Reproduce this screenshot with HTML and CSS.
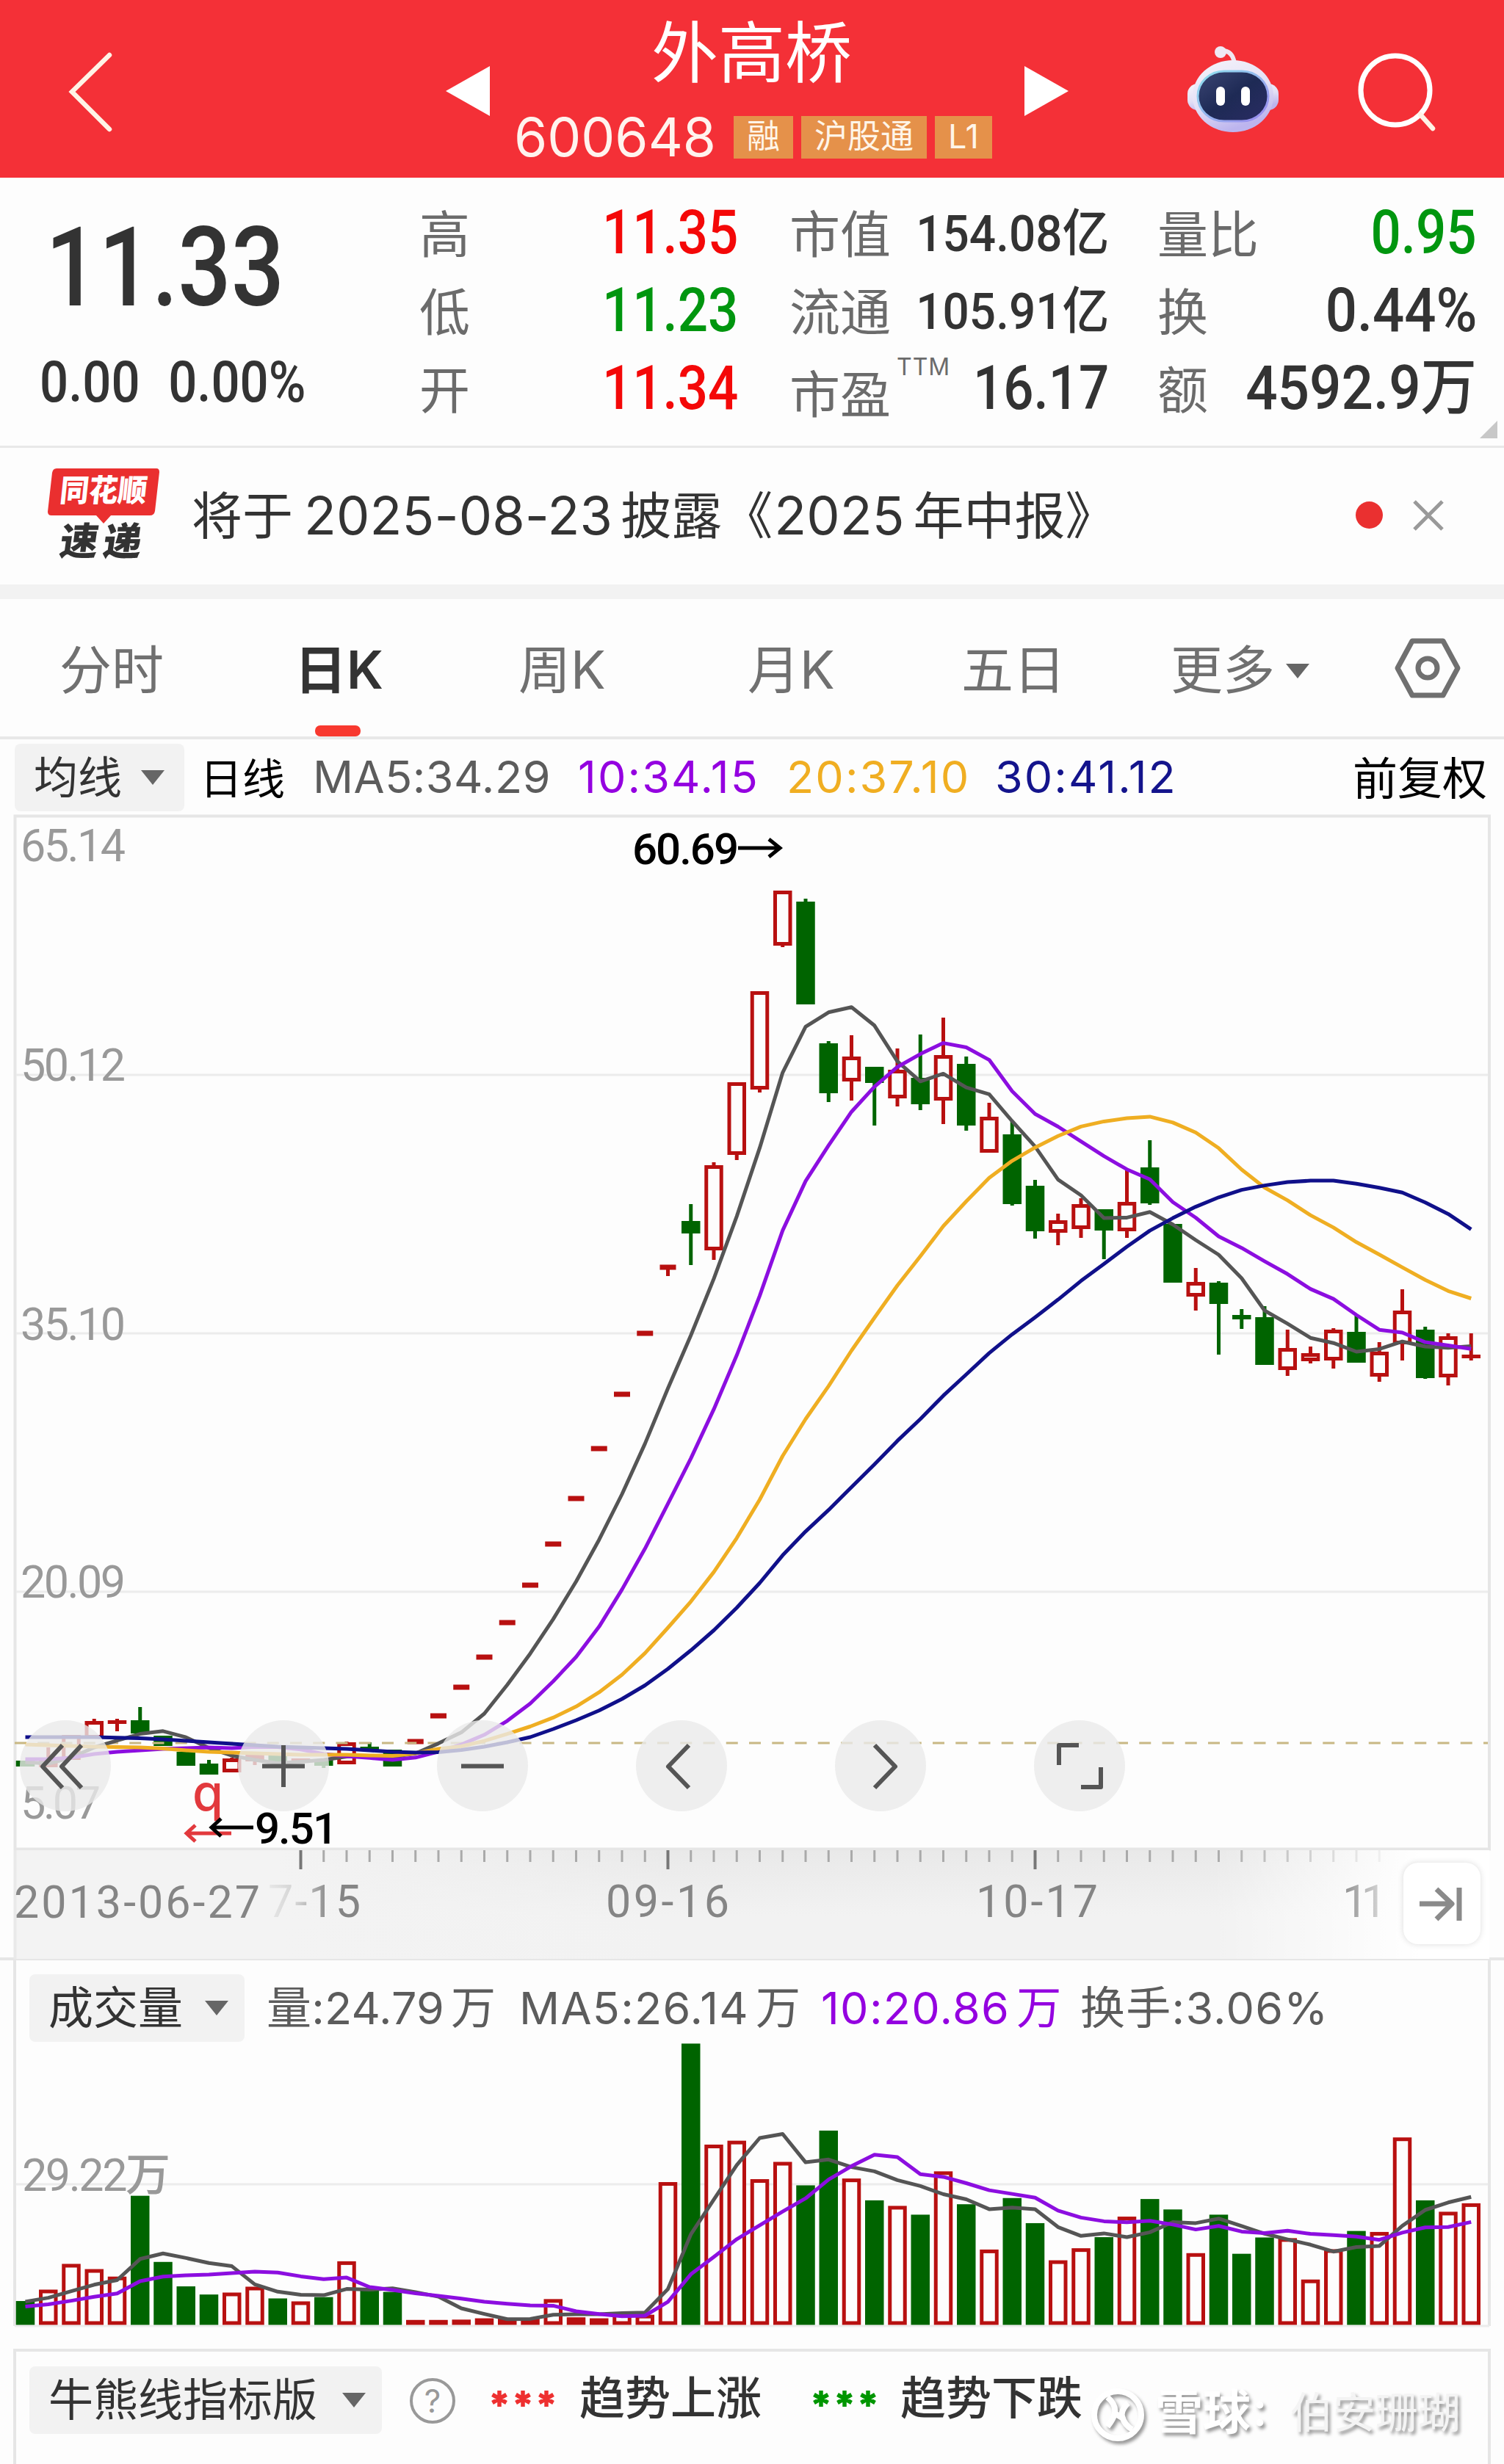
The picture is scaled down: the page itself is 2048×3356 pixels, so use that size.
FILE: index.html
```html
<!DOCTYPE html>
<html lang="zh-CN">
<head>
<meta charset="utf-8">
<title>外高桥 600648</title>
<link rel="stylesheet" href="styles.css">
</head>
<body>
<header class="topbar">
  <svg class="icon-back" width="70" height="120" viewBox="0 0 70 120"><path d="M59 10 L8 60 L59 111" /></svg>
  <svg class="icon-prev" width="60" height="68" viewBox="0 0 60 68"><path d="M60 0 V68 L0 34 Z"/></svg>
  <div class="stock">
    <div class="stock-name">外高桥</div>
    <div class="stock-meta">
      <span class="code">600648</span>
      <span class="badge">融</span><span class="badge">沪股通</span><span class="badge">L1</span>
    </div>
  </div>
  <svg class="icon-next" width="60" height="68" viewBox="0 0 60 68"><path d="M0 0 V68 L60 34 Z"/></svg>
  <svg class="icon-robot" width="130" height="124" viewBox="0 0 130 124">
    <defs>
      <linearGradient id="shell" x1="0" y1="0" x2="0.4" y2="1"><stop offset="0" stop-color="#f6f4fb"/><stop offset="0.6" stop-color="#e3dff5"/><stop offset="1" stop-color="#bcb4ee"/></linearGradient>
      <linearGradient id="visor" x1="0" y1="0" x2="1" y2="1"><stop offset="0" stop-color="#3b4674"/><stop offset="0.5" stop-color="#1e2a55"/><stop offset="1" stop-color="#2a2c63"/></linearGradient>
      <linearGradient id="rim" x1="0" y1="0" x2="1" y2="1"><stop offset="0" stop-color="#8fe3ee"/><stop offset="1" stop-color="#9a86ee"/></linearGradient>
    </defs>
    <path class="antenna" d="M49 11 Q64 10 67 28"/>
    <circle cx="48" cy="13" r="8" fill="#efe9f4"/>
    <rect x="3" y="56" width="124" height="36" rx="14" fill="url(#shell)"/>
    <ellipse cx="65" cy="73" rx="55" ry="49" fill="url(#shell)"/>
    <rect x="17" y="39" width="96" height="68" rx="36" fill="url(#visor)" stroke="url(#rim)" stroke-width="3"/>
    <rect x="42" y="60" width="12" height="26" rx="6" fill="#fff"/>
    <rect x="76" y="60" width="12" height="26" rx="6" fill="#fff"/>
  </svg>
  <svg class="icon-search" width="120" height="120" viewBox="0 0 120 120"><circle cx="54" cy="58" r="47"/><path d="M88 91 L105 110"/></svg>
</header>

<section class="quote">
  <div class="last">
    <div class="price">11.33</div>
    <div class="change"><span>0.00</span><span>0.00%</span></div>
  </div>
  <dl class="stats stats-a">
    <div><dt>高</dt><dd class="up">11.35</dd></div>
    <div><dt>低</dt><dd class="down">11.23</dd></div>
    <div><dt>开</dt><dd class="up">11.34</dd></div>
  </dl>
  <dl class="stats stats-b">
    <div><dt>市值</dt><dd class="small">154.08亿</dd></div>
    <div><dt>流通</dt><dd class="small">105.91亿</dd></div>
    <div><dt class="pe">市盈<sup>TTM</sup></dt><dd>16.17</dd></div>
  </dl>
  <dl class="stats stats-c">
    <div><dt>量比</dt><dd class="down">0.95</dd></div>
    <div><dt>换</dt><dd class="turnover">0.44%</dd></div>
    <div><dt>额</dt><dd class="amount">4592.9万</dd></div>
  </dl>
  <svg class="expand" width="24" height="24" viewBox="0 0 24 24"><path d="M24 0 V24 H0 Z"/></svg>
</section>

<section class="news">
  <div class="news-logo">
    <svg class="bubble" width="152" height="76" viewBox="0 0 152 76"><path d="M12 0 H148 Q152 0 152 5 L146 58 Q145 64 139 64 H86 L76 75 L66 64 H5 Q0 64 0 59 L6 6 Q7 0 12 0Z"/></svg>
    <span class="logo-top">同花顺</span>
    <span class="logo-bottom">速递</span>
  </div>
  <p class="news-text">将于<span class="latin">2025-08-23</span>披露《<span class="latin year">2025</span>年中报》</p>
  <span class="dot"></span>
  <svg class="icon-close" width="44" height="44" viewBox="0 0 44 44"><path d="M3 3 L41 41 M41 3 L3 41"/></svg>
</section>

<nav class="tabs">
  <a class="t1">分时</a><a class="t2 active">日K</a><a class="t3">周K</a><a class="t4">月K</a><a class="t5">五日</a><a class="t6">更多<i class="caret"></i></a>
  <svg class="icon-settings" width="92" height="84" viewBox="0 0 92 84"><path d="M25 5 H67 L87 42 L67 79 H25 L5 42 Z"/><circle cx="46" cy="42" r="13"/></svg>
</nav>

<div class="indicator main-ind">
  <span class="chip chip-ma">均线<i class="caret"></i></span>
  <span class="period">日线</span>
  <span class="ma v5">MA5:34.29</span>
  <span class="ma v10">10:34.15</span>
  <span class="ma v20">20:37.10</span>
  <span class="ma v30">30:41.12</span>
  <span class="adjust">前复权</span>
</div>

<section class="chart">
  <svg id="price" width="2048" height="1411" viewBox="0 1109 2048 1411">
    <path class="frame" d="M20.500 2520 V1111.500 H2028 V2518.500 H20"/>
    <path class="grid" d="M22 1464 H2026 M22 1816 H2026 M22 2168 H2026"/>
    <g class="axis-text">
      <text x="28" y="1173" textLength="143">65.14</text>
      <text x="28" y="1472" textLength="143">50.12</text>
      <text x="28" y="1825" textLength="143">35.10</text>
      <text x="28" y="2176" textLength="143">20.09</text>
      <text x="28" y="2477" textLength="109">5.07</text>
    </g>
    <g id="candles"></g>
    <path class="ref" d="M20 2374 H2026"/>
    <g id="averages"></g>
    <g class="mark">
      <text x="861" y="1177" textLength="145">60.69</text>
      <path d="M1005 1155 H1062 M1047 1143 L1062 1155 L1047 1167"/>
    </g>
    <g class="mark event">
      <text class="q" x="262" y="2466">q</text>
      <path d="M315 2497 H254 M266 2486 L254 2497 L266 2508"/>
    </g>
    <g class="mark">
      <text x="347" y="2511" textLength="113">9.51</text>
      <path d="M345 2489 H288 M301 2477 L288 2489 L301 2501"/>
    </g>
  </svg>
  <div class="tools">
    <button><svg viewBox="0 0 124 124"><path d="M58 34 L31 63 L58 92 M84 34 L57 63 L84 92"/></svg></button>
    <button><svg viewBox="0 0 124 124"><path d="M62 34 V91 M33 62.500 H91"/></svg></button>
    <button><svg viewBox="0 0 124 124"><path d="M33 62.500 H91"/></svg></button>
    <button><svg viewBox="0 0 124 124"><path d="M72 34 L44 63 L72 92"/></svg></button>
    <button><svg viewBox="0 0 124 124"><path d="M54 34 L82 63 L54 92"/></svg></button>
    <button><svg viewBox="0 0 124 124"><path d="M34 61 V34 H61 M64 91 H91 V64"/></svg></button>
  </div>
</section>

<section class="timeline">
  <svg id="axis" width="2048" height="148" viewBox="0 2520 2048 148">
    <defs>
      <linearGradient id="fadeLeft" gradientUnits="userSpaceOnUse" x1="360" y1="0" x2="450" y2="0"><stop offset="0" stop-color="#858585" stop-opacity="0.08"/><stop offset="0.5" stop-color="#858585" stop-opacity="0.3"/><stop offset="1" stop-color="#858585"/></linearGradient>
      <linearGradient id="fadeRight" gradientUnits="userSpaceOnUse" x1="1820" y1="0" x2="1900" y2="0"><stop offset="0" stop-color="#858585"/><stop offset="1" stop-color="#858585" stop-opacity="0.1"/></linearGradient>
      <linearGradient id="band" x1="0" y1="0" x2="0" y2="1"><stop offset="0" stop-color="#e9e9e9"/><stop offset="0.6" stop-color="#f2f2f2"/></linearGradient>
      <linearGradient id="bandLeft" x1="0" y1="0" x2="1" y2="0"><stop offset="0.4" stop-color="#f3f3f3"/><stop offset="1" stop-color="#f3f3f3" stop-opacity="0"/></linearGradient>
      <linearGradient id="bandRight" x1="0" y1="0" x2="1" y2="0"><stop offset="0" stop-color="#fff" stop-opacity="0"/><stop offset="0.75" stop-color="#fff"/></linearGradient>
    </defs>
    <rect x="20" y="2520" width="2008" height="148" fill="url(#band)"/>
    <g id="ticks"></g>
    <rect x="20" y="2520" width="900" height="148" fill="url(#bandLeft)"/>
    <g id="ticksLeft"></g>
    <rect x="1650" y="2520" width="378" height="148" fill="url(#bandRight)"/>
    <rect class="side" x="18.500" y="2520" width="4" height="148"/>
    <g class="date">
      <text x="19" y="2612" textLength="335">2013-06-27</text>
      <text x="365" y="2611" textLength="126" fill="url(#fadeLeft)">7-15</text>
      <text x="825" y="2611" textLength="168">09-16</text>
      <text x="1329" y="2611" textLength="166">10-17</text>
      <text x="1828" y="2611" textLength="60" fill="url(#fadeRight)">11</text>
    </g>
  </svg>
  <button class="jump"><svg width="105" height="111" viewBox="0 0 105 111"><path d="M22 56 H62 M45 36 L66 56 L45 77 M76 34 V79"/></svg></button>
</section>

<section class="volume">
  <div class="indicator">
    <span class="chip chip-vol">成交量<i class="caret"></i></span>
    <span class="ma vol">量:24.79<b>万</b></span>
    <span class="ma v5">MA5:26.14<b>万</b></span>
    <span class="ma v10">10:20.86<b>万</b></span>
    <span class="ma turn">换手:3.06%</span>
  </div>
  <svg id="volume" width="2048" height="390" viewBox="0 2780 2048 390">
    <path class="grid" d="M22 2975 H2026"/>
    <g class="axis-text"><text x="30" y="2984" textLength="202">29.22万</text></g>
    <path class="baseline" d="M20 3168 H2028"/>
    <g id="bars"></g>
    <g id="volumeAverages"></g>
  </svg>
</section>

<section class="trend">
  <span class="chip chip-trend">牛熊线指标版<i class="caret"></i></span>
  <svg class="help" width="66" height="66" viewBox="0 0 66 66"><circle cx="33" cy="33" r="29"/><text x="33" y="49" text-anchor="middle">?</text></svg>
  <svg class="stars red" width="90" height="28" viewBox="0 0 90 28"><path d="M14 3 V25 M4.500 8.500 L23.500 19.500 M23.500 8.500 L4.500 19.500 M46 3 V25 M36.500 8.500 L55.500 19.500 M55.500 8.500 L36.500 19.500 M78 3 V25 M68.500 8.500 L87.500 19.500 M87.500 8.500 L68.500 19.500"/></svg>
  <span class="label rise">趋势上涨</span>
  <svg class="stars green" width="90" height="28" viewBox="0 0 90 28"><path d="M14 3 V25 M4.500 8.500 L23.500 19.500 M23.500 8.500 L4.500 19.500 M46 3 V25 M36.500 8.500 L55.500 19.500 M55.500 8.500 L36.500 19.500 M78 3 V25 M68.500 8.500 L87.500 19.500 M87.500 8.500 L68.500 19.500"/></svg>
  <span class="label fall">趋势下跌</span>
  <div class="watermark">
    <svg width="76" height="76" viewBox="0 0 76 76"><circle cx="38" cy="38" r="32"/><path d="M24 14 Q36 24 34 36 Q32 44 24 54 M52 22 Q42 32 44 40 Q47 52 58 58 M34 36 L44 42"/></svg>
    <span class="brand">雪球</span><span class="colon">：</span><span class="author">伯安珊瑚</span>
  </div>
</section>
<script src="chart.js"></script>
</body>
</html>
```
FILE: styles.css
```css
* { box-sizing: border-box; margin: 0; padding: 0; }
body {
  width: 2048px;
  height: 3356px;
  overflow: hidden;
  background: #fdfdfd;
  color: #333;
  font-family: Inter, "Noto Sans CJK SC", sans-serif;
}
svg { display: block; flex: none; }
i, b, sup { font-style: normal; font-weight: inherit; }
button { border: 0; background: none; }

.topbar { height: 242px; background: #f43037; display: flex; align-items: flex-start; color: #fff; }
.topbar path { fill: #fff; }
.topbar .icon-back { margin: 65px 0 0 90px; }
.topbar .icon-back path, .topbar .icon-search path { fill: none; stroke: #fff3e6; stroke-width: 6.500; stroke-linecap: round; }
.icon-prev { margin: 90px 0 0 447px; }
.stock { width: 728px; height: 242px; display: flex; flex-direction: column; align-items: center; }
.stock-name { font-size: 91px; line-height: 100px; margin: 22px 0 0 -15px; font-weight: 400; }
.stock-meta { display: flex; align-items: center; align-self: flex-start; height: 58px; margin: 36px 0 0 33px; }
.code { font-size: 73px; line-height: 58px; width: 299px; letter-spacing: 0; color: #fff3ee; font-weight: 400; white-space: nowrap; }
.badge { height: 58px; padding: 0 18px; margin-right: 11px; background: #e5914a; color: #fff5e8; font-size: 45px; line-height: 56px; }
.icon-next { margin: 90px 0 0; }
.icon-robot { margin: 58px 0 0 159px; }
.topbar .antenna { fill: none; stroke: #f0e6f0; stroke-width: 6; }
.icon-search { margin: 65px 0 0 102px; }
.icon-search circle { fill: none; stroke: #fff; stroke-width: 7; }

.quote { position: relative; height: 368px; display: flex; border-bottom: 3px solid #e8e8e8; }
.last { width: 571px; font-family: Roboto, sans-serif; }
.price { font-size: 150px; line-height: 150px; margin: 48px 0 0 62px; font-weight: 500; transform: scaleX(.85); transform-origin: left; width: max-content; }
.change { display: flex; gap: 43px; font-size: 77px; line-height: 77px; margin: 43px 0 0 54px; font-weight: 500; transform: scaleX(.895); transform-origin: left; width: max-content; }
.stats { padding-top: 23px; }
.stats-a { width: 434px; margin-right: 70px; }
.stats-b { width: 435px; margin-right: 66px; }
.stats-c { width: 435px; }
.stats > div { display: flex; justify-content: space-between; height: 106px; align-items: center; }
dt { font-size: 69px; line-height: 106px; color: #6b6b6b; font-weight: 370; white-space: nowrap; padding-top: 4px; }
.pe { display: flex; padding-top: 16px; }
.pe sup { font-size: 32px; line-height: 36px; letter-spacing: 1px; margin: -3px 0 0 8px; height: 36px; }
dd { font-family: Roboto, "Noto Sans CJK SC", sans-serif; font-size: 84px; line-height: 100px; font-weight: 500; transform: scaleX(.865); transform-origin: right; white-space: nowrap; margin-top: -3px; }
dd.small { font-size: 69px; transform: scaleX(.925); margin-top: 2px; }
.stats-b > div:first-child dd, .stats-b > div:nth-child(2) dd { margin-left: -60px; }
dd.turnover { transform: scaleX(.905); }
dd.amount { margin-left: -80px; transform: scaleX(.91); }
.up { color: #f40808; }
.down { color: #00960f; }
.expand { position: absolute; right: 9px; bottom: 10px; fill: #c8c8c8; }

.news { height: 206px; display: flex; align-items: flex-start; border-bottom: 20px solid #f2f2f2; }
.news-logo { position: relative; width: 152px; height: 140px; margin: 28px 0 0 65px; display: flex; flex-direction: column; align-items: center; }
.bubble { position: absolute; left: 0; top: 0; fill: #ea2f2f; }
.logo-top { position: relative; color: #fff; font-size: 42px; line-height: 60px; font-weight: 900; transform: skewX(-6deg) scaleX(.94); }
.logo-bottom { font-size: 52px; line-height: 56px; margin-top: 12px; letter-spacing: 7px; font-weight: 900; transform: skewX(-8deg); }
.news-text { width: 1585px; margin: 52px 0 0 44px; font-size: 69px; line-height: 80px; white-space: nowrap; }
.latin { font-size: 72px; padding: 0 11px 0 15px; letter-spacing: .1px; }
.year { padding: 0 12px 0 2px; }
.dot { width: 37px; height: 37px; border-radius: 50%; background: #ea3030; margin-top: 73px; }
.icon-close { margin: 70px 0 0 40px; }
.icon-close path { stroke: #999; stroke-width: 5; }

.tabs { position: relative; height: 191px; border-bottom: 4px solid #e8e8e8; display: flex; align-items: flex-start; font-size: 71px; line-height: 100px; color: #707070; font-weight: 370; }
.tabs a { margin-top: 46px; height: 141px; white-space: nowrap; flex: none; }
.t1 { width: 320px; margin-left: 81px; }
.tabs .active { color: #333; font-weight: 600; width: 115px; display: flex; flex-direction: column; position: relative; margin-right: 190px; }
.active::after { content: ""; width: 62px; height: 15px; border-radius: 7px; background: #f8392f; margin: 26px 0 0 28px; }
.t3 { width: 312px; }
.t4 { width: 291px; }
.t5 { width: 285px; }
.t6 { width: 305px; }
.caret { display: inline-block; width: 0; height: 0; border: 16px solid transparent; border-top: 20px solid #666; border-bottom: 0; vertical-align: middle; }
.t6 .caret { margin: 0 0 9px 15px; }
.icon-settings { margin-top: 52px; margin-left: -1px; }
.icon-settings path, .icon-settings circle { fill: none; stroke: #707070; stroke-width: 7; stroke-linejoin: round; }

.indicator { display: flex; align-items: center; white-space: nowrap; }
.chip { display: flex; align-items: center; justify-content: space-between; flex: none; height: 92px; background: #f2f2f2; border-radius: 8px; font-size: 61px; line-height: 88px; color: #333; padding: 0 22px 0 26px; }
.ma { font-size: 61px; line-height: 92px; letter-spacing: 1.300px; color: #5c5c5c; flex: none; font-weight: 400; }
.ma.v10 { color: #9400e0; }
.ma.v20 { color: #f0ae22; }
.ma.v30 { color: #14148c; }
.main-ind { height: 102px; padding: 0 0 0 20px; }
.main-ind .ma { letter-spacing: 2.100px; }
.main-ind .chip { width: 231px; padding-right: 27px; font-size: 60px; margin-top: 2px; }
.period { width: 154px; margin-left: 21px; font-size: 58px; color: #000; margin-top: -2px; }
.main-ind .v5 { width: 361px; letter-spacing: .5px; }
.main-ind .v10 { width: 284px; }
.main-ind .v20 { width: 284px; }
.main-ind .v30 { width: 487px; }
.adjust { font-size: 61px; color: #000; margin-top: -4px; }

.chart { position: relative; height: 1411px; }
#price { overflow: visible; }
.frame { fill: none; stroke: #e6e6e6; stroke-width: 4; }
.grid, .baseline { fill: none; stroke: #ececec; stroke-width: 3; }
.ref { stroke: #c8b884; stroke-width: 3; stroke-dasharray: 16 15.250; }
text { font-family: Roboto, "Noto Sans CJK SC", sans-serif; }
.axis-text { fill: #999; font-size: 61px; font-weight: 450; }
.mark text { font-size: 60px; font-weight: 500; fill: #000; }
.mark path { fill: none; stroke: #000; stroke-width: 5; }
.event path { stroke: #e2393d; }
.mark .q { fill: #e2393d; font-family: Inter, sans-serif; font-size: 68px; font-weight: 500; }
.line { fill: none; stroke-width: 5; stroke-linejoin: round; }
.l5 { stroke: #555; }
.l10 { stroke: #8c0ee0; }
.l20 { stroke: #efae22; }
.l30 { stroke: #10108a; }
.rise-box { fill: #fdfdfd; stroke: #b81010; stroke-width: 5; }
.rise-solid { fill: #b81010; }
.fall-solid { fill: #006400; }
.rise-wick { stroke: #b81010; stroke-width: 5; }
.fall-wick { stroke: #006400; stroke-width: 5; }
.tools { position: absolute; left: 27px; top: 1234px; display: flex; gap: 147px; }
.tools button { width: 124px; height: 124px; border-radius: 50%; background: rgba(234, 234, 234, .8); }
.tools button:first-child { margin-right: 26px; }
.tools path { fill: none; stroke: #555; stroke-width: 6; stroke-linejoin: round; }

.timeline { position: relative; height: 148px; }
.side { fill: #e9e9e9; }
.date { fill: #858585; font-size: 61px; font-weight: 450; }
.minor { stroke: #aaa; stroke-width: 3; }
.major { stroke: #777; stroke-width: 4; }
.jump { position: absolute; right: 32px; top: 17px; width: 105px; height: 111px; border-radius: 20px; background: #fff; box-shadow: 0 0 8px rgba(0, 0, 0, .14); }
.jump path { fill: none; stroke: #8a8a8a; stroke-width: 7; stroke-linejoin: round; }

.volume { height: 502px; border-top: 4px solid #e6e6e6; margin-top: -2px; background: linear-gradient(#e6e6e6, #e6e6e6) 18px 0 / 4px 502px no-repeat, linear-gradient(#e6e6e6, #e6e6e6) 2026px 0 / 4px 502px no-repeat; }
.volume .indicator { height: 110px; padding: 19px 0 0 40px; }
.chip-vol { width: 293px; }
.ma b { margin-left: 9px; }
.volume .vol { margin-left: 30px; width: 344px; letter-spacing: .2px; }
.volume .v5 { width: 411px; }
.volume .v10 { width: 353px; }

.trend { position: relative; height: 157px; margin: 31px 18px 0; border: 4px solid #e6e6e6; border-bottom: 0; display: flex; align-items: flex-start; padding: 20px 0 0 18px; }
.chip-trend { width: 480px; }
.help { margin: 14px 0 0 36px; }
.help circle { fill: none; stroke: #999; stroke-width: 4; }
.help text { fill: #999; font-size: 44px; font-family: Inter, sans-serif; }
.stars { margin-top: 30px; fill: none; stroke-width: 5.500; }
.stars.red { stroke: #ee3030; margin-left: 44px; }
.stars.green { stroke: #009600; }
.label { font-size: 62px; line-height: 88px; white-space: nowrap; font-weight: 500; flex: none; }
.rise { width: 315px; margin-left: 33px; }
.fall { margin-left: 32px; }
.watermark { position: absolute; left: 1462px; top: 48px; display: flex; align-items: center; color: #fff; height: 76px; white-space: nowrap; filter: drop-shadow(3px 4px 2px rgba(0, 0, 0, .4)); }
.watermark circle, .watermark path { fill: none; stroke: #fff; stroke-width: 8; }
.brand, .colon, .author { line-height: 76px; margin-top: -6px; }
.brand { font-size: 65px; font-weight: 700; margin-left: 13px; }
.colon { font-size: 50px; width: 54px; font-weight: 700; }
.author { font-size: 58px; color: #f4f4f4; }
```
FILE: chart.js
```js
// Each session: direction, high, body top, body bottom, low (chart units, y grows downward).
const sessions = [
  ['g',2398,2398,2406,2406],['r',2380,2397,2407,2407],['r',2363,2363,2397,2397],['r',2341,2344,2368,2368],
  ['r',2341,2343,2348,2358],['g',2325,2343,2361,2361],['g',2364,2364,2378,2378],['g',2386,2386,2405,2405],
  ['g',2397,2402,2417,2417],['r',2394,2395,2414,2414],['r',2390,2390,2399,2404],['g',2390,2390,2400,2400],
  ['r',2395,2395,2400,2400],['g',2397,2397,2405,2408],['r',2372,2373,2403,2403],['g',2373,2379,2385,2385],
  ['g',2383,2383,2406,2406],['l',2372,2372,2372,2372],['l',2337,2337,2337,2337],['l',2298,2298,2298,2298],
  ['l',2257,2257,2257,2257],['l',2210,2210,2210,2210],['l',2159,2159,2159,2159],['l',2103,2103,2103,2103],
  ['l',2041,2041,2041,2041],['l',1973,1973,1973,1973],['l',1899,1899,1899,1899],['l',1816,1816,1816,1816],
  ['l',1726,1726,1726,1738],['g',1640,1663,1680,1723],['r',1583,1587,1703,1716],['r',1474,1474,1573,1580],
  ['r',1350,1350,1484,1488],['r',1213,1213,1288,1290],['g',1224,1228,1368,1368],['g',1418,1421,1489,1501],
  ['r',1410,1439,1473,1499],['g',1453,1453,1475,1533],['r',1428,1457,1496,1507],['g',1409,1468,1504,1512],
  ['r',1386,1437,1499,1531],['g',1439,1449,1533,1540],['r',1502,1521,1570,1570],['g',1527,1545,1640,1642],
  ['g',1607,1615,1677,1687],['r',1653,1662,1679,1696],['r',1632,1640,1674,1686],['g',1647,1647,1676,1715],
  ['r',1594,1637,1677,1686],['g',1553,1590,1639,1641],['g',1667,1667,1747,1747],['r',1727,1746,1766,1785],
  ['g',1745,1747,1776,1845],['g',1783,1791,1797,1810],['g',1779,1794,1859,1859],['r',1811,1836,1866,1874],
  ['r',1834,1843,1854,1857],['r',1809,1811,1853,1864],['g',1791,1814,1856,1856],['r',1828,1841,1875,1882],
  ['r',1756,1785,1831,1853],['g',1807,1811,1877,1878],['r',1816,1820,1876,1887],['r',1816,1845,1850,1853]
];
// Bar tops of the volume pane, on a scale whose zero line is 1141.
const volumes = [1068,1033,954,970,993,745,948,1023,1048,1042,1024,1060,1069,1056,946,1035,1040,1126,1126,1125,
  1121,1121,1121,1062,1118,1121,1105,1110,703,278,588,576,694,641,713,545,692,759,776,803,670,771,910,752,829,943,
  906,872,809,755,787,921,803,923,873,875,1002,909,853,856,566,759,794,768];

const X0 = 34.5, STEP = 31.25, HALF = 12.75;
const x = i => X0 + STEP * i;
const fill = (id, html) => { document.getElementById(id).innerHTML = html; };
const rect = (cls, cx, top, bottom, inset) =>
  `<rect class="${cls}" x="${cx - HALF + inset}" y="${top + inset}" width="${2 * (HALF - inset)}" height="${bottom - top - 2 * inset}"/>`;

fill('candles', sessions.map(([dir, high, top, bottom, low], i) => {
  const cx = x(i);
  const tone = dir === 'g' ? 'fall' : 'rise';
  const wick = `<path class="${tone}-wick" d="M${cx} ${high}V${top}M${cx} ${bottom}V${low}"/>`;
  if (dir === 'l') return wick + `<rect class="rise-solid" x="${cx - 11}" y="${top - 3.5}" width="22" height="7"/>`;
  if (dir === 'g') return wick + rect('fall-solid', cx, top, bottom, 0);
  return wick + (bottom - top < 8 ? rect('rise-solid', cx, top, bottom, 0) : rect('rise-box', cx, top, bottom, 2.5));
}).join(''));

// Known leading values stand in for sessions before the visible window.
function average(values, n, lead) {
  return values.map((_, i) => i < n - 1 ? lead[i]
    : values.slice(i - n + 1, i + 1).reduce((a, b) => a + b, 0) / n);
}
const line = (cls, values, y) =>
  `<polyline class="line ${cls}" points="${values.map((v, i) => `${x(i)},${y(v).toFixed(1)}`).join(' ')}"/>`;

const closes = sessions.map(s => s[0] === 'g' ? s[3] : s[2]);
const same = v => v;
fill('averages',
  line('l5', average(closes, 5, [2400,2402,2394,2380]), same) +
  line('l10', average(closes, 10, [2396,2396,2394,2389,2386,2384,2382,2381,2380]), same) +
  line('l20', average(closes, 20, [2376,2377,2378,2379,2379.5,2380,2381.5,2384,2386,2387,2388,2389,2390,2390,2390,2391,2391.5,2388,2382]), same) +
  line('l30', average(closes, 30, [2366,2366,2366,2366,2366.7,2367.5,2369,2371,2373,2375,2377,2379,2380,2381,2382,2384,2386,2387,2386.5,2383.5,2379,2373,2366,2355,2343,2329.7,2314,2295.5,2273]), same));

const vy = v => 2660 + v / 2.253;
fill('bars', volumes.map((v, i) => {
  const dir = sessions[i][0];
  const top = vy(v), base = 3166.5;
  if (dir === 'g') return rect('fall-solid', x(i), top, base, 0);
  return base - top < 12 ? rect('rise-solid', x(i), top, base, 0) : rect('rise-box', x(i), top, base, 2.5);
}).join(''));
fill('volumeAverages',
  line('l5', average(volumes, 5, [1070,1058,1038,1018]), vy) +
  line('l10', average(volumes, 10, [1085,1078,1067,1055,1045,1007,993,989,987]), vy));

const tick = i => [12, 28, 44].includes(i)
  ? `<path class="major" d="M${x(i)} 2520V2546"/>`
  : `<path class="minor" d="M${x(i)} 2520V2536"/>`;
const range = (a, b) => Array.from({ length: b - a + 1 }, (_, k) => tick(a + k)).join('');
fill('ticks', range(29, 59));
fill('ticksLeft', range(12, 28));
```
